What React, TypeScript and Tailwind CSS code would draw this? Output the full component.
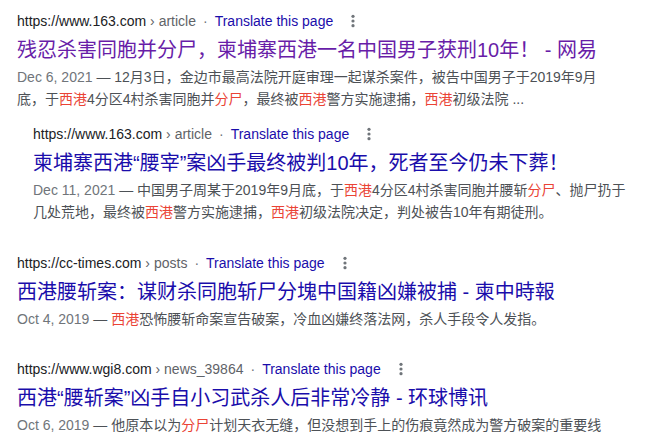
import React from 'react';

type Piece = string | { hl: string };

type Result = {
  site: string;
  path: string;
  title: string;
  visited?: boolean;
  date: string;
  lines: Piece[][];
  indent?: boolean;
  gap: string;
};

const RESULTS: Result[] = [
  {
    site: 'https://www.163.com',
    path: 'article',
    title: '残忍杀害同胞并分尸，柬埔寨西港一名中国男子获刑10年！ - 网易',
    visited: true,
    date: 'Dec 6, 2021',
    lines: [
      [' — 12月3日，金边市最高法院开庭审理一起谋杀案件，被告中国男子于2019年9月'],
      ['底，于', { hl: '西港' }, '4分区4村杀害同胞并', { hl: '分尸' }, '，最终被', { hl: '西港' }, '警方实施逮捕，', { hl: '西港' }, '初级法院 ...'],
    ],
    gap: 'mt-[11px]',
  },
  {
    site: 'https://www.163.com',
    path: 'article',
    title: '柬埔寨西港“腰宰”案凶手最终被判10年，死者至今仍未下葬！',
    date: 'Dec 11, 2021',
    lines: [
      [' — 中国男子周某于2019年9月底，于', { hl: '西港' }, '4分区4村杀害同胞并腰斩', { hl: '分尸' }, '、抛尸扔于'],
      ['几处荒地，最终被', { hl: '西港' }, '警方实施逮捕，', { hl: '西港' }, '初级法院决定，判处被告10年有期徒刑。'],
    ],
    indent: true,
    gap: 'mt-[14px]',
  },
  {
    site: 'https://cc-times.com',
    path: 'posts',
    title: '西港腰斩案：谋财杀同胞斩尸分塊中国籍凶嫌被捕 - 柬中時報',
    date: 'Oct 4, 2019',
    lines: [[' — ', { hl: '西港' }, '恐怖腰斩命案宣告破案，冷血凶嫌终落法网，杀人手段令人发指。']],
    gap: 'mt-[30px]',
  },
  {
    site: 'https://www.wgi8.com',
    path: 'news_39864',
    title: '西港“腰斩案”凶手自小习武杀人后非常冷静 - 环球博讯',
    date: 'Oct 6, 2019',
    lines: [[' — 他原本以为', { hl: '分尸' }, '计划天衣无缝，但没想到手上的伤痕竟然成为警方破案的重要线']],
    gap: 'mt-[29px]',
  },
];

function Dots() {
  return (
    <svg width="6" height="16" viewBox="0 0 6 16" className="shrink-0">
      <circle cx="3" cy="3.3" r="1.6" fill="#70757a" />
      <circle cx="3" cy="8" r="1.6" fill="#70757a" />
      <circle cx="3" cy="12.7" r="1.6" fill="#70757a" />
    </svg>
  );
}

function Row({ r }: { r: Result }) {
  return (
    <div className={`${r.gap} ${r.indent ? 'pl-[33px]' : 'pl-[17px]'}`}>
      <div className="flex h-[20px] items-center whitespace-nowrap text-[14px] leading-[20px]">
        <span className="text-[#202124]">{r.site}</span>
        <span className="text-[#5f6368]">&nbsp;› {r.path}</span>
        <span className="px-[7px] text-[#70757a]">·</span>
        <span className="text-[#1a0dab]">Translate this page</span>
        <span className="ml-[17px] flex items-center">
          <Dots />
        </span>
      </div>
      <div
        className={`mt-[6px] h-[26px] whitespace-nowrap text-[20px] leading-[26px] ${
          r.visited ? 'text-[#681da8]' : 'text-[#1a0dab]'
        }`}
      >
        {r.title}
      </div>
      <div className="mt-[3px] text-[14px] leading-[22px] text-[#4d5156]">
        {r.lines.map((line, i) => (
          <div key={i} className="h-[22px] whitespace-nowrap">
            {i === 0 && <span className="text-[#70757a]">{r.date}</span>}
            {line.map((p, j) =>
              typeof p === 'string' ? (
                <span key={j}>{p}</span>
              ) : (
                <span key={j} className="text-[#ea4335]">
                  {p.hl}
                </span>
              )
            )}
          </div>
        ))}
      </div>
    </div>
  );
}

export default function App() {
  return (
    <div
      className="h-[433px] w-[671px] overflow-hidden bg-white"
      style={{ fontFamily: 'Arial, "Liberation Sans", "Noto Sans CJK SC", sans-serif' }}
    >
      {RESULTS.map((r, i) => (
        <Row key={i} r={r} />
      ))}
    </div>
  );
}
